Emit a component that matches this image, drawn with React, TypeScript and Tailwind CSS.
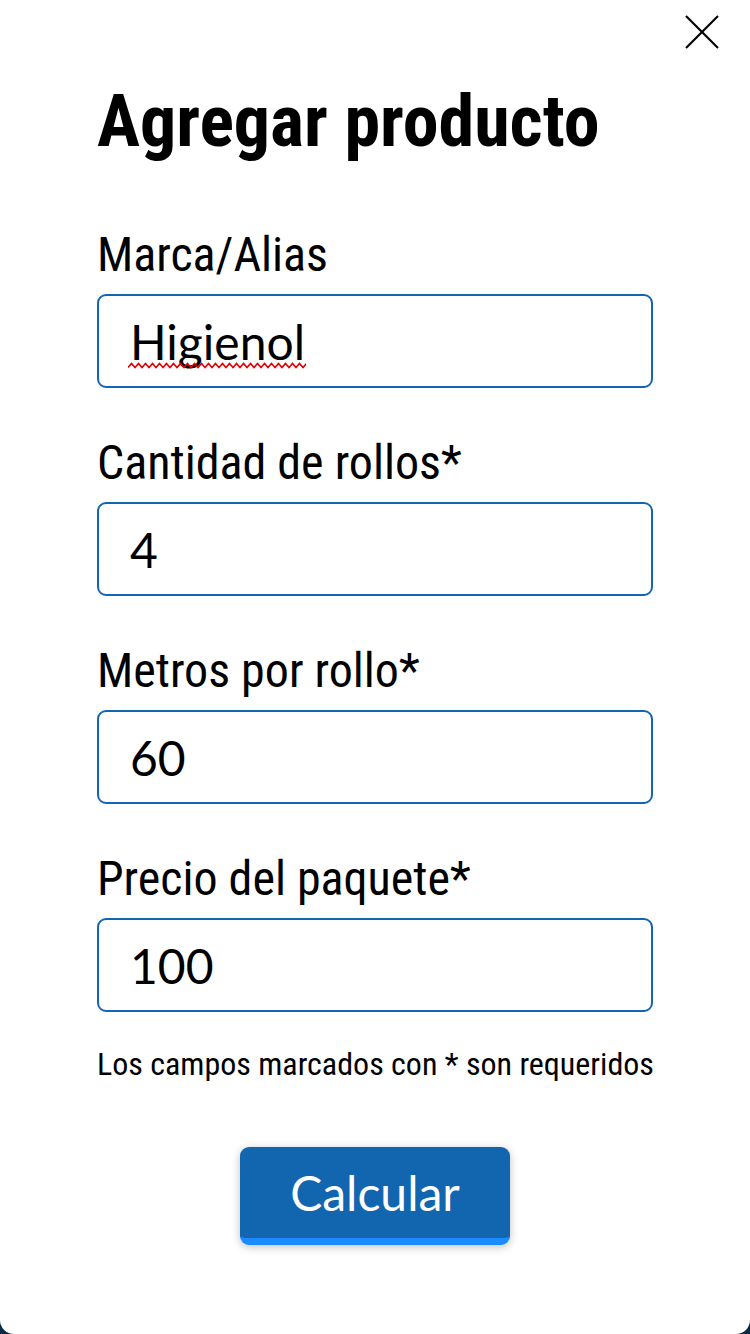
import { useState } from 'react'

const labelFont = 'font-["Roboto_Condensed","Liberation_Sans_Narrow",Roboto,sans-serif] font-stretch-condensed'
const inputFont = 'font-[Lato,"Noto_Sans",sans-serif]'

interface Field {
  label: string
  value: string
  spell?: boolean
}

const FIELDS: Field[] = [
  { label: 'Marca/Alias', value: 'Higienol', spell: true },
  { label: 'Cantidad de rollos*', value: '4' },
  { label: 'Metros por rollo*', value: '60' },
  { label: 'Precio del paquete*', value: '100' },
]

export default function App() {
  const [values, setValues] = useState(FIELDS.map((f) => f.value))

  return (
    <div className="h-[1334px] w-[750px] bg-[#0b2a47]">
      <div className="relative flex h-full flex-col rounded-b-[14px] bg-white px-[97px] pt-[86px]">
        {/* Close */}
        <button className="absolute right-[30px] top-[14px] p-0">
          <svg width="36" height="36" viewBox="0 0 36 36" fill="none" stroke="#000" strokeWidth="2.2">
            <line x1="2" y1="2" x2="34" y2="34" />
            <line x1="34" y1="2" x2="2" y2="34" />
          </svg>
        </button>

        <h1 className={`${labelFont} text-[72px] font-bold leading-[72px] text-black`}>
          Agregar producto
        </h1>

        <div className="mt-[73px] flex flex-col gap-[51px]">
          {FIELDS.map((field, i) => (
            <label key={field.label} className="flex flex-col">
              <span className={`${labelFont} mb-[15px] text-[48px] leading-[48px] text-black`}>
                {field.label}
              </span>
              <div className="relative">
                <input
                  value={values[i]}
                  onChange={(e) => setValues(values.map((v, j) => (j === i ? e.target.value : v)))}
                  spellCheck={false}
                  className={`${inputFont} h-[94px] w-full rounded-[9px] border-2 border-[#1565b0] px-[31px] text-[48px] text-black outline-none`}
                />
                {/* spellcheck squiggle */}
                {field.spell && (
                  <svg
                    className="pointer-events-none absolute left-[31px] top-[68px]"
                    width="178"
                    height="7"
                    viewBox="0 0 178 7"
                    fill="none"
                    stroke="#e30000"
                    strokeWidth="1.6"
                  >
                    <path d="M0 5.5 l3.5 -4 l3.5 4 l3.5 -4 l3.5 4 l3.5 -4 l3.5 4 l3.5 -4 l3.5 4 l3.5 -4 l3.5 4 l3.5 -4 l3.5 4 l3.5 -4 l3.5 4 l3.5 -4 l3.5 4 l3.5 -4 l3.5 4 l3.5 -4 l3.5 4 l3.5 -4 l3.5 4 l3.5 -4 l3.5 4 l3.5 -4 l3.5 4 l3.5 -4 l3.5 4 l3.5 -4 l3.5 4 l3.5 -4 l3.5 4 l3.5 -4 l3.5 4 l3.5 -4 l3.5 4 l3.5 -4 l3.5 4 l3.5 -4 l3.5 4 l3.5 -4 l3.5 4 l3.5 -4 l3.5 4 l3.5 -4 l3.5 4 l3.5 -4 l3.5 4 l3.5 -4 l3.5 4 l3.5 -4" />
                  </svg>
                )}
              </div>
            </label>
          ))}
        </div>

        <p className={`${labelFont} mt-[36px] whitespace-nowrap text-[32px] leading-[33px] text-black`}>
          Los campos marcados con * son requeridos
        </p>

        <div className="mt-[66px] flex justify-center">
          <button
            className={`${inputFont} h-[98px] w-[270px] rounded-[9px] border-b-[7px] border-[#1a8cff] bg-[#1266b0] text-[48px] text-white shadow-[0_2px_8px_rgba(0,0,0,0.25)]`}
          >
            Calcular
          </button>
        </div>
      </div>
    </div>
  )
}
